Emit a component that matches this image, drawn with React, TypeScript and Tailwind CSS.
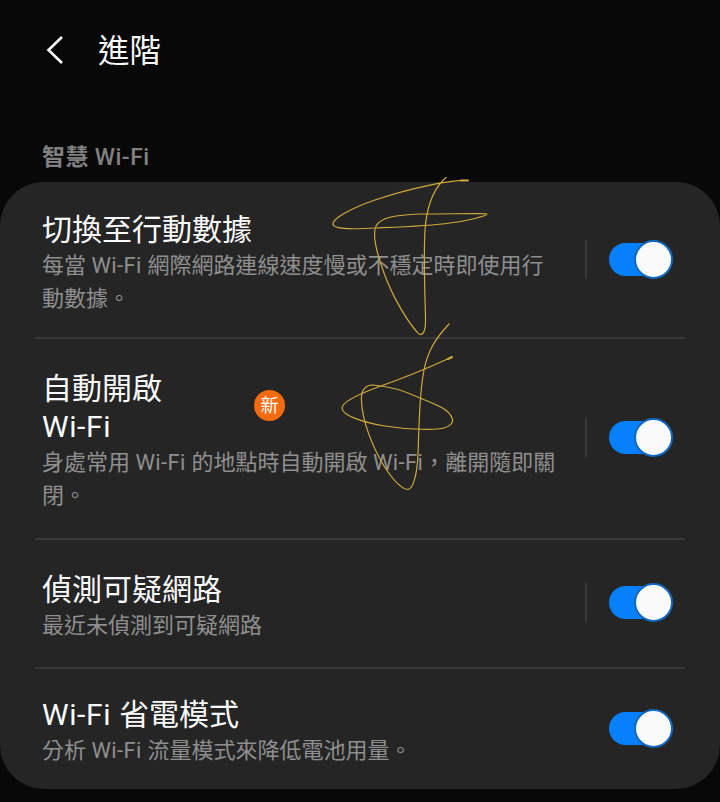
import { useState } from "react";

type Setting = {
  id: string;
  title: string[];
  description: string[];
  rowClass: string;
  isNew?: boolean;
  hasDetail?: boolean;
};

const SETTINGS: Setting[] = [
  {
    id: "mobile-data",
    title: ["切換至行動數據"],
    description: ["每當 Wi-Fi 網際網路連線速度慢或不穩定時即使用行", "動數據。"],
    rowClass: "h-[155px]",
    hasDetail: true,
  },
  {
    id: "auto-wifi",
    title: ["自動開啟", "Wi-Fi"],
    description: ["身處常用 Wi-Fi 的地點時自動開啟 Wi-Fi，離開隨即關", "閉。"],
    rowClass: "h-[199px] pb-[2px]",
    isNew: true,
    hasDetail: true,
  },
  {
    id: "suspicious",
    title: ["偵測可疑網路"],
    description: ["最近未偵測到可疑網路"],
    rowClass: "h-[127px] pb-[2px]",
    hasDetail: true,
  },
  {
    id: "power-save",
    title: ["Wi-Fi 省電模式"],
    description: ["分析 Wi-Fi 流量模式來降低電池用量。"],
    rowClass: "h-[120px] pb-[2px]",
  },
];

// Latin words sit a little looser than the Chinese text around them
function MixedText({ text, latinClass }: { text: string; latinClass: string }) {
  return (
    <>
      {text.split(/(Wi-Fi ?)/).map((part, i) =>
        part.startsWith("Wi-Fi") ? (
          <span key={i} className={latinClass}>
            {part}
          </span>
        ) : (
          part
        )
      )}
    </>
  );
}

function Toggle({ label }: { label: string }) {
  const [on, setOn] = useState(true);

  return (
    <button
      role="switch"
      aria-checked={on}
      aria-label={label}
      onClick={() => setOn(!on)}
      className={`flex h-[33px] w-[64px] items-center rounded-full ${
        on ? "justify-end bg-linear-to-r from-[#0780fc] from-70% to-transparent to-70%" : "justify-start bg-[#555555]"
      }`}
    >
      <span className="size-[39px] shrink-0 rounded-full border-2 border-[#1268c0] bg-[#fafafa]" />
    </button>
  );
}

function SettingRow({ setting }: { setting: Setting }) {
  return (
    <div className={`flex items-center pr-[47px] pl-[42px] ${setting.rowClass}`}>
      <div className="flex-1 pt-[7px]">
        <div className="flex items-center">
          <h2 className="text-[30px] leading-[38px] text-[#fafafa]">
            {setting.title.map((line) => (
              <span key={line} className="block whitespace-nowrap">
                <MixedText text={line} latinClass="tracking-[0.6px]" />
              </span>
            ))}
          </h2>
          {setting.isNew && (
            <span className="mb-[5px] ml-[92px] flex size-[31px] items-center justify-center rounded-full bg-[#f46b10] text-[18px] leading-none text-white">
              新
            </span>
          )}
        </div>
        <p className="text-[22px] leading-[33px] text-[#8f8f8f]">
          {setting.description.map((line) => (
            <span key={line} className="block whitespace-nowrap">
              <MixedText text={line} latinClass="tracking-[0.35px]" />
            </span>
          ))}
        </p>
      </div>
      {setting.hasDetail && <div className="mr-[22px] h-[39px] w-[2px] bg-[#383838]" />}
      <Toggle label={setting.title.join(" ")} />
    </div>
  );
}

function Scribbles() {
  return (
    <svg
      className="pointer-events-none absolute top-0 left-0"
      width="720"
      height="802"
      viewBox="0 0 720 802"
      fill="none"
      stroke="#d0aa3c"
      strokeWidth="1.2"
      strokeLinecap="round"
      strokeLinejoin="round"
    >
      <path d="M468 180.500C450 180 410 188 375 200C352 208 333 218 333 224C333 230 358 229 376 228C400 227 430 226 450 223C467 221 487 216 487 214C487 213 450 214 420 214C396 215 381 217 376 226C372 235 377 254 384 273C393 298 408 322 417 332C421 337 426 335 425.500 318C425 294 423 248 425.500 224C428 203 435 187 446 177.500" />
      <path d="M461 180.500H468" strokeWidth="2" />
      <path d="M452 357C426 369 404 378 378 387C362 393 342 402 342 408C342 416 366 423 385 426C409 430 437 430 444 428C451 426 454 422 452 418C449 409 435 404 420 398C405 391 387 386 373 385C363 385 361 393 361.500 401C362 420 372 446 384 466C393 480 402 489 408 489.500C413 489 417 475 418 455C419 431 419 394 424 370C428 350 436 338 449 324" />
      <path d="M448 359L452 357" strokeWidth="2" />
    </svg>
  );
}

export default function App() {
  return (
    <main
      lang="zh-Hant"
      className="relative h-[802px] w-[720px] overflow-hidden bg-[#080808] font-[Roboto,'Noto_Sans_CJK_TC',sans-serif]"
    >
      <header className="flex h-[100px] items-center pl-[46px]">
        <button aria-label="返回">
          <svg
            width="18"
            height="28"
            viewBox="0 0 18 28"
            fill="none"
            stroke="#fafafa"
            strokeWidth="2.600"
          >
            <path d="M16 1L2.500 14L16 27" />
          </svg>
        </button>
        <h1 className="mt-[3px] ml-[34px] text-[31.500px] leading-[40px] text-[#fafafa]">進階</h1>
      </header>

      <h3 className="mt-[41px] h-[41px] pl-[42px] text-[23px] leading-[34px] font-medium text-[#808080]">
        <span className="font-bold tracking-[0.5px]">智慧</span>{" "}
        <span className="tracking-[0.5px]">Wi-Fi</span>
      </h3>

      <section className="h-[607px] rounded-[44px] bg-[#252525]">
        {SETTINGS.map((setting, index) => (
          <div key={setting.id}>
            {index > 0 && <div className="mx-[35px] h-[2px] bg-[#393939]" />}
            <SettingRow setting={setting} />
          </div>
        ))}
      </section>

      <Scribbles />
    </main>
  );
}
